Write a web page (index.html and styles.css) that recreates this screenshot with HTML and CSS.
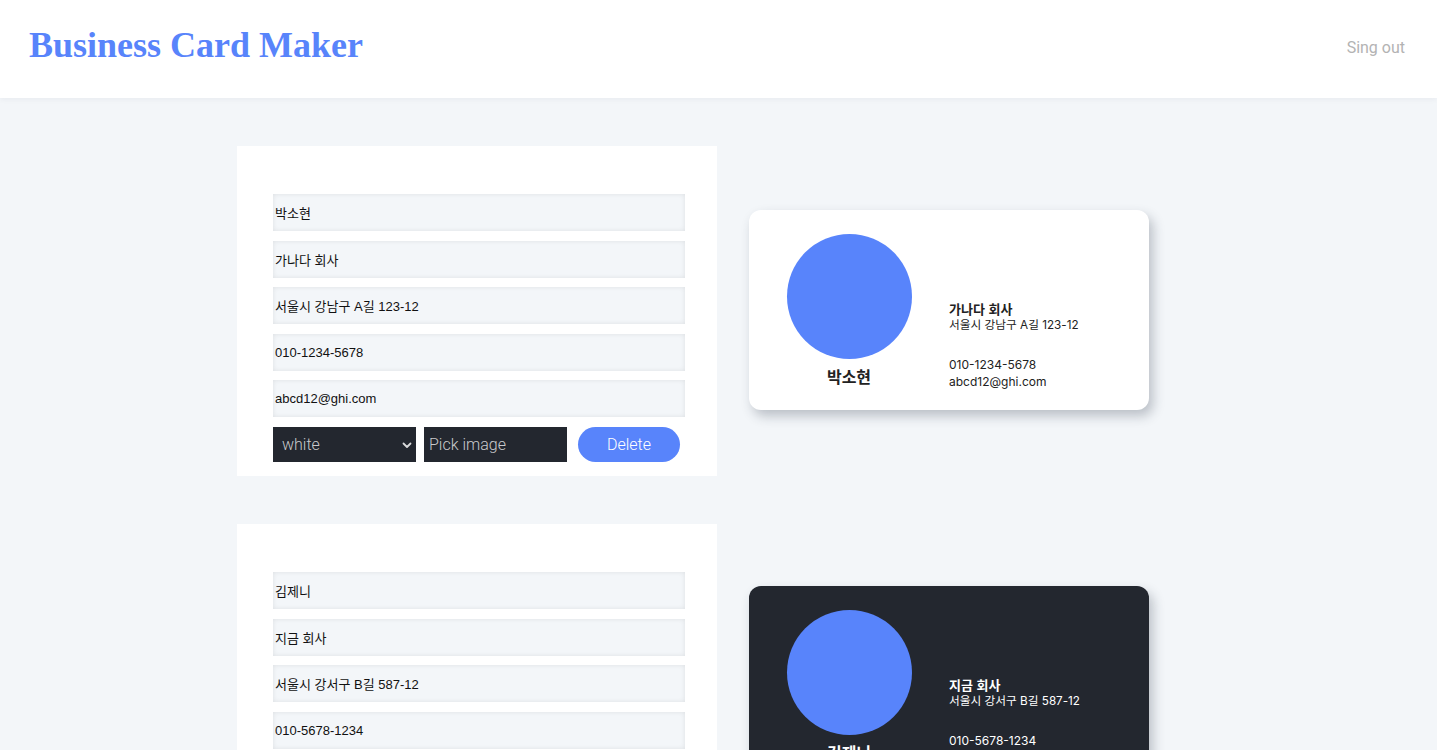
FILE: index.html
```html
<!DOCTYPE html>
<html lang="ko">
<head>
<meta charset="utf-8">
<title>Business Card Maker</title>
<link rel="stylesheet" href="styles.css">
</head>
<body>
<header class="header">
  <h1 class="logo">Business Card Maker</h1>
  <button class="signout">Sing out</button>
</header>
<main class="maker">
  <section class="row">
    <form class="editor">
      <input class="field" type="text" value="박소현">
      <input class="field" type="text" value="가나다 회사">
      <input class="field" type="text" value="서울시 강남구 A길 123-12">
      <input class="field" type="text" value="010-1234-5678">
      <input class="field" type="text" value="abcd12@ghi.com">
      <div class="controls">
        <div class="select">
          <span>white</span>
          <svg class="chev" width="10" height="7" viewBox="0 0 10 7"><path d="M1.5 1.5 L5 5 L8.5 1.5" fill="none" stroke="#d9dadc" stroke-width="1.8" stroke-linecap="round" stroke-linejoin="round"/></svg>
        </div>
        <div class="pick">Pick image</div>
        <button class="delete" type="button">Delete</button>
      </div>
    </form>
    <div class="card light">
      <div class="card-left">
        <div class="avatar"></div>
        <div class="name">박소현</div>
      </div>
      <div class="card-info">
        <div class="company">가나다 회사</div>
        <div class="addr">서울시 강남구 A길 123-12</div>
        <div class="phone">010-1234-5678</div>
        <div class="email">abcd12@ghi.com</div>
      </div>
    </div>
  </section>
  <section class="row second">
    <form class="editor">
      <input class="field" type="text" value="김제니">
      <input class="field" type="text" value="지금 회사">
      <input class="field" type="text" value="서울시 강서구 B길 587-12">
      <input class="field" type="text" value="010-5678-1234">
      <input class="field" type="text" value="jennie@ghi.com">
      <div class="controls">
        <div class="select">
          <span>dark</span>
          <svg class="chev" width="10" height="7" viewBox="0 0 10 7"><path d="M1.5 1.5 L5 5 L8.5 1.5" fill="none" stroke="#d9dadc" stroke-width="1.8" stroke-linecap="round" stroke-linejoin="round"/></svg>
        </div>
        <div class="pick">Pick image</div>
        <button class="delete" type="button">Delete</button>
      </div>
    </form>
    <div class="card dark">
      <div class="card-left">
        <div class="avatar"></div>
        <div class="name">김제니</div>
      </div>
      <div class="card-info">
        <div class="company">지금 회사</div>
        <div class="addr">서울시 강서구 B길 587-12</div>
        <div class="phone">010-5678-1234</div>
        <div class="email">jennie@ghi.com</div>
      </div>
    </div>
  </section>
</main>
</body>
</html>
```

FILE: styles.css
```css
* { box-sizing: border-box; }
html, body { margin: 0; padding: 0; }
body {
  background: #f3f6f9;
  font-family: "Liberation Sans", "Noto Sans CJK KR", sans-serif;
  overflow: hidden;
  height: 750px;
}
.header {
  height: 98px;
  background: #fff;
  display: flex;
  align-items: center;
  justify-content: space-between;
  padding: 0 32px 0 29px;
  box-shadow: 0 1px 6px rgba(30, 40, 60, 0.06);
  position: relative;
  z-index: 2;
}
.logo {
  margin: 0;
  font-family: "Liberation Serif", serif;
  font-weight: bold;
  font-size: 36px;
  color: #5884fb;
  padding-bottom: 8px;
}
.signout {
  border: 0;
  background: none;
  font-family: "Roboto", sans-serif;
  font-size: 16px;
  color: #b3b3b3;
  padding: 0 0 4px 0;
}
.maker {
  padding: 48px 0 0 237px;
  display: flex;
  flex-direction: column;
  gap: 48px;
}
.row {
  display: flex;
  align-items: center;
  gap: 32px;
}
.row .card { margin-top: -2px; }
.row.second .card { margin-top: -6px; }
.editor {
  width: 480px;
  background: #fff;
  padding: 48px 32px 14px 36px;
  display: flex;
  flex-direction: column;
  gap: 9.5px;
  margin: 0;
}
.field {
  width: 412px;
  height: 37px;
  border: 0;
  outline: 0;
  background: #f3f6f9;
  box-shadow: inset 0 0 5px rgba(0, 0, 0, 0.09);
  font-family: "Liberation Sans", "Noto Sans CJK KR", sans-serif;
  font-size: 13px;
  color: #111;
  padding: 0 2px;
}
.controls {
  display: flex;
  align-items: center;
  height: 35px;
  margin-top: 0.5px;
}
.select {
  width: 143px;
  height: 35px;
  background: #23272f;
  color: #c9cacc;
  font-family: "Roboto", sans-serif;
  font-weight: 300;
  font-size: 16px;
  display: flex;
  align-items: center;
  justify-content: space-between;
  padding: 0 4px 0 9px;
}
.chev { margin-top: 1px; }
.pick {
  width: 143px;
  height: 35px;
  margin-left: 8px;
  background: #23272f;
  color: #c9cacc;
  font-family: "Roboto", sans-serif;
  font-weight: 300;
  font-size: 16px;
  display: flex;
  align-items: center;
  padding-left: 5px;
}
.delete {
  width: 102px;
  height: 35px;
  margin-left: 11px;
  border: 0;
  border-radius: 18px;
  background: #5884fb;
  color: #fff;
  font-family: "Roboto", sans-serif;
  font-weight: 300;
  font-size: 16px;
  padding: 0;
}
.card {
  width: 400px;
  height: 200px;
  border-radius: 12px;
  box-shadow: 4px 6px 12px rgba(40, 50, 70, 0.28);
  display: flex;
  font-family: "Inter", "Noto Sans CJK KR", sans-serif;
}
.card.light { background: #fff; color: #222; }
.card.dark { background: #23272f; color: #fff; }
.card-left {
  width: 200px;
  display: flex;
  flex-direction: column;
  align-items: center;
  padding-top: 24px;
}
.avatar {
  width: 125px;
  height: 125px;
  border-radius: 50%;
  background: #5884fb;
}
.name {
  font-family: "Noto Sans CJK KR", sans-serif;
  font-weight: bold;
  font-size: 16px;
  margin-top: 6px;
  line-height: 22px;
}
.card-info {
  display: flex;
  flex-direction: column;
  justify-content: flex-end;
  padding-bottom: 20px;
  font-size: 12px;
  line-height: 17px;
}
.company {
  font-family: "Noto Sans CJK KR", sans-serif;
  font-weight: bold;
  font-size: 13px;
}
.addr { font-size: 11.7px; }
.phone { margin-top: 22px; font-size: 12px; }
.email { font-size: 12px; }
```
